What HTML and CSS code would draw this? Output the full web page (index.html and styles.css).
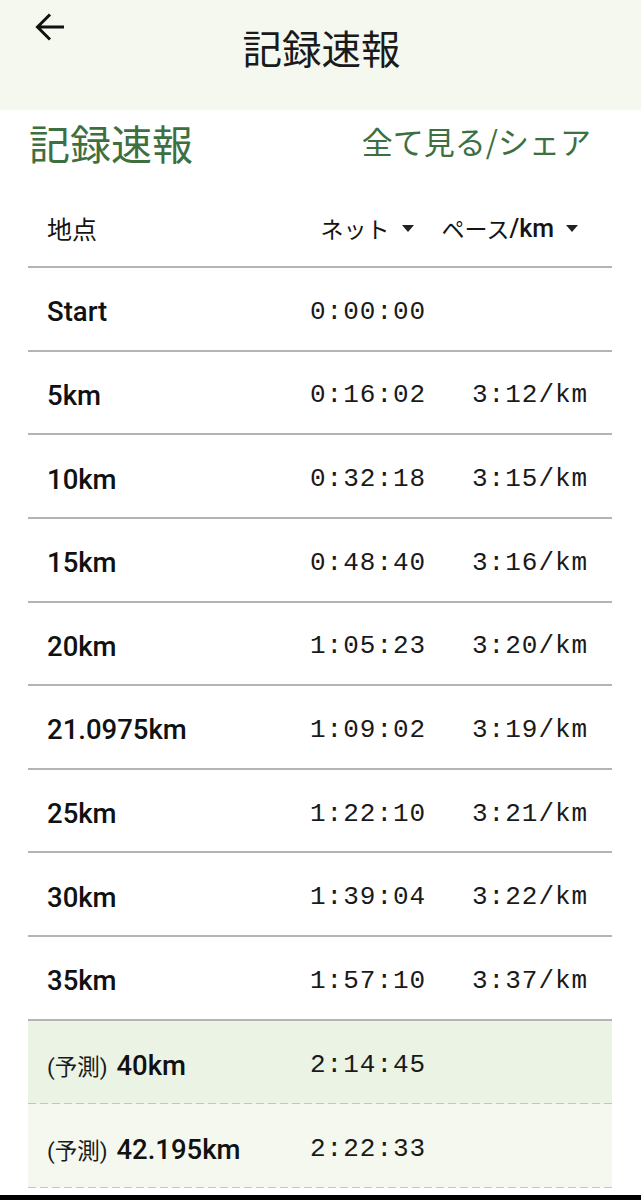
FILE: index.html
```html
<!DOCTYPE html>
<html lang="ja">
<head>
<meta charset="utf-8">
<title>記録速報</title>
<link rel="stylesheet" href="styles.css">
</head>
<body>
<header class="appbar">
  <button class="back" aria-label="戻る">
    <svg width="32" height="32" viewBox="0 0 32 32"><path d="M30 16H4M16 3.5L3.5 16 16 28.5" fill="none" stroke="#111" stroke-width="3" stroke-linejoin="miter"/></svg>
  </button>
  <h1 class="appbar-title">記録速報</h1>
  <span></span>
</header>
<main class="content">
  <div class="section-head">
    <h2 class="section-title">記録速報</h2>
    <a class="section-link">全て見る/シェア</a>
  </div>
  <div class="table">
    <div class="thead">
      <span class="th-point">地点</span>
      <span class="th-sort"><span class="ja">ネット</span><i class="caret"></i></span>
      <span class="th-sort th-pace"><span class="ja">ペース</span>/km<i class="caret"></i></span>
    </div>
    <div class="row"><span class="point">Start</span><span class="time">0:00:00</span><span class="time"></span></div>
    <div class="row"><span class="point">5km</span><span class="time">0:16:02</span><span class="time">3:12/km</span></div>
    <div class="row"><span class="point">10km</span><span class="time">0:32:18</span><span class="time">3:15/km</span></div>
    <div class="row"><span class="point">15km</span><span class="time">0:48:40</span><span class="time">3:16/km</span></div>
    <div class="row"><span class="point">20km</span><span class="time">1:05:23</span><span class="time">3:20/km</span></div>
    <div class="row"><span class="point">21.0975km</span><span class="time">1:09:02</span><span class="time">3:19/km</span></div>
    <div class="row"><span class="point">25km</span><span class="time">1:22:10</span><span class="time">3:21/km</span></div>
    <div class="row"><span class="point">30km</span><span class="time">1:39:04</span><span class="time">3:22/km</span></div>
    <div class="row"><span class="point">35km</span><span class="time">1:57:10</span><span class="time">3:37/km</span></div>
    <div class="row pred pred-1"><span class="point"><small class="pred-tag">(予測)</small> 40km</span><span class="time">2:14:45</span><span class="time"></span></div>
    <div class="row pred pred-2"><span class="point"><small class="pred-tag">(予測)</small> 42.195km</span><span class="time">2:22:33</span><span class="time"></span></div>
  </div>
</main>
<div class="navbar"></div>
</body>
</html>
```

FILE: styles.css
```css
* { box-sizing: border-box; }
html, body { margin: 0; padding: 0; background: #fff; }
body {
  width: 641px;
  height: 1200px;
  overflow: hidden;
  font-family: Roboto, "Noto Sans CJK JP", sans-serif;
  color: #141414;
  position: relative;
}
.appbar {
  height: 110px;
  background: #f5f8ef;
  display: grid;
  grid-template-columns: 1fr auto 1fr;
  align-items: start;
}
.back {
  justify-self: start;
  margin: 11px 0 0 34px;
  padding: 0;
  border: 0;
  background: none;
  width: 32px;
  height: 32px;
  display: block;
}
.back svg { display: block; }
.appbar-title {
  margin: 22px 0 0 2px;
  font-family: "Noto Sans CJK JP", sans-serif;
  font-weight: 400;
  font-size: 39.5px;
  line-height: 50px;
  color: #1a1a1a;
}
.content { padding: 0 29px 0 28px; }
.section-head {
  display: flex;
  justify-content: space-between;
  align-items: center;
  height: 70px;
  padding: 0 21px 0 1px;
}
.section-title {
  margin: -6px 0 0;
  font-family: "Noto Sans CJK JP", sans-serif;
  font-weight: 400;
  font-size: 41px;
  line-height: 50px;
  color: #3e6f40;
}
.section-link {
  font-family: "Noto Sans CJK JP", sans-serif;
  font-size: 31px;
  line-height: 40px;
  color: #3e6f40;
  margin-top: -8px;
}
.thead {
  display: flex;
  align-items: center;
  height: 88px;
  padding: 10px 34px 0 19px;
  border-bottom: 2px solid #b4b4b4;
}
.th-point {
  flex: 1;
  font-family: "Noto Sans CJK JP", sans-serif;
  font-size: 25px;
}
.th-sort {
  display: inline-flex;
  align-items: center;
  font-family: Roboto, "Noto Sans CJK JP", sans-serif;
  font-weight: 500;
  font-size: 25px;
}
.ja {
  font-family: "Noto Sans CJK JP", sans-serif;
  font-weight: 400;
  font-size: 23px;
}
.th-pace { margin-left: 28px; }
.caret {
  display: inline-block;
  width: 0;
  height: 0;
  margin-left: 12px;
  border-left: 6.5px solid transparent;
  border-right: 6.5px solid transparent;
  border-top: 7px solid #222;
}
.row {
  display: grid;
  grid-template-columns: 263px 162px 1fr;
  align-items: center;
  height: 83.64px;
  padding: 6px 0 0 19px;
  border-bottom: 2px solid #b4b4b4;
}
.point {
  font-family: Roboto, "Noto Sans CJK JP", sans-serif;
  font-weight: 500;
  font-size: 27.5px;
  color: #111;
}
.time {
  font-family: "Liberation Mono", "DejaVu Sans Mono", monospace;
  font-size: 26px;
  letter-spacing: 1px;
  color: #1a1a1a;
}
.pred-tag {
  font-family: Roboto, "Noto Sans CJK JP", sans-serif;
  font-weight: 400;
  font-size: 22.5px;
  color: #1a1a1a;
  margin-right: 2px;
}
.pred {
  border-bottom: 0;
  background-repeat: no-repeat;
  background-position: left bottom;
  background-size: 100% 1px;
  background-image: repeating-linear-gradient(to right, #c4c4c4 0 8px, transparent 8px 12px);
}
.pred-1 { background-color: #ebf3e5; }
.pred-2 { background-color: #f4f8ef; }
.navbar {
  position: absolute;
  left: 0;
  right: 0;
  bottom: 0;
  height: 5px;
  background: #000;
}
```
